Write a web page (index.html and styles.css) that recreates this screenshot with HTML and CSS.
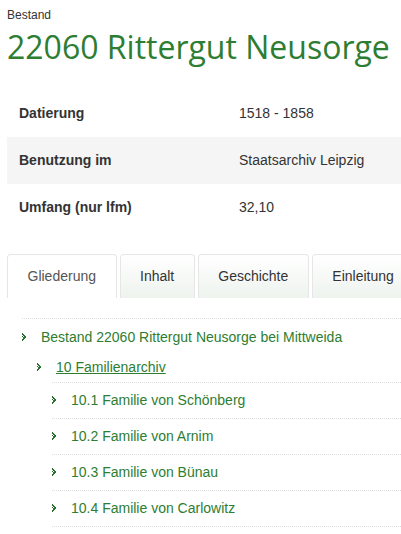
FILE: index.html
```html
<!DOCTYPE html>
<html lang="de">
<head>
    <meta charset="UTF-8">
    <meta name="viewport" content="width=device-width, initial-scale=1.0">
    <title>22060 Rittergut Neusorge</title>
    <link rel="stylesheet" href="styles.css">
</head>
<body>
    <div class="page">
        <div class="kicker">Bestand</div>
        <h1 class="title">22060 Rittergut Neusorge</h1>

        <!-- Eckdaten -->
        <table class="facts">
            <tr>
                <th>Datierung</th>
                <td>1518 - 1858</td>
            </tr>
            <tr class="shade">
                <th>Benutzung im</th>
                <td>Staatsarchiv Leipzig</td>
            </tr>
            <tr>
                <th>Umfang (nur lfm)</th>
                <td>32,10</td>
            </tr>
        </table>

        <!-- Reiter -->
        <ul class="tabs">
            <li class="tab active">Gliederung</li>
            <li class="tab">Inhalt</li>
            <li class="tab">Geschichte</li>
            <li class="tab">Einleitung</li>
        </ul>

        <!-- Gliederung -->
        <ul class="tree level-1">
            <li>
                <a class="node" href="#"><svg class="arrow" viewBox="0 0 5 8"><path d="M0 0h1v1H0zM0 1h2v1H0zM1 2h2v1H1zM0 3h1v1H0zM2 3h2v2H2zM1 4h1v1H1zM1 5h2v1H1zM0 6h2v1H0zM0 7h1v1H0z"/></svg>Bestand 22060 Rittergut Neusorge bei Mittweida</a>
                <ul class="tree level-2">
                    <li>
                        <a class="node current" href="#"><svg class="arrow" viewBox="0 0 5 8"><path d="M0 0h1v1H0zM0 1h2v1H0zM1 2h2v1H1zM0 3h1v1H0zM2 3h2v2H2zM1 4h1v1H1zM1 5h2v1H1zM0 6h2v1H0zM0 7h1v1H0z"/></svg><span class="label">10 Familienarchiv</span></a>
                        <ul class="tree level-3">
                            <li><a class="node" href="#"><svg class="arrow" viewBox="0 0 5 8"><path d="M0 0h1v1H0zM0 1h2v1H0zM1 2h2v1H1zM0 3h1v1H0zM2 3h2v2H2zM1 4h1v1H1zM1 5h2v1H1zM0 6h2v1H0zM0 7h1v1H0z"/></svg>10.1 Familie von Schönberg</a></li>
                            <li><a class="node" href="#"><svg class="arrow" viewBox="0 0 5 8"><path d="M0 0h1v1H0zM0 1h2v1H0zM1 2h2v1H1zM0 3h1v1H0zM2 3h2v2H2zM1 4h1v1H1zM1 5h2v1H1zM0 6h2v1H0zM0 7h1v1H0z"/></svg>10.2 Familie von Arnim</a></li>
                            <li><a class="node" href="#"><svg class="arrow" viewBox="0 0 5 8"><path d="M0 0h1v1H0zM0 1h2v1H0zM1 2h2v1H1zM0 3h1v1H0zM2 3h2v2H2zM1 4h1v1H1zM1 5h2v1H1zM0 6h2v1H0zM0 7h1v1H0z"/></svg>10.3 Familie von Bünau</a></li>
                            <li><a class="node" href="#"><svg class="arrow" viewBox="0 0 5 8"><path d="M0 0h1v1H0zM0 1h2v1H0zM1 2h2v1H1zM0 3h1v1H0zM2 3h2v2H2zM1 4h1v1H1zM1 5h2v1H1zM0 6h2v1H0zM0 7h1v1H0z"/></svg>10.4 Familie von Carlowitz</a></li>
                        </ul>
                    </li>
                </ul>
            </li>
        </ul>
    </div>
</body>
</html>
```

FILE: styles.css
```css
html, body {
    margin: 0;
    background: #fff;
    overflow: hidden;
}

body {
    font-family: "Liberation Sans", Arial, sans-serif;
    font-size: 14px;
    color: #333;
}

.page {
    width: 430px;
    padding: 7px 0 0 7px;
}

.kicker {
    font-size: 12px;
    line-height: 16px;
    color: #333;
}

.title {
    margin: 4px 0 0;
    font-family: "Open Sans", sans-serif;
    font-weight: 400;
    font-size: 32px;
    line-height: 40px;
    color: #2d7d32;
}

/* Eckdaten */
.facts {
    width: 100%;
    margin-top: 23px;
    border-collapse: collapse;
    table-layout: fixed;
}

.facts th,
.facts td {
    padding: 14px 12px;
    line-height: 19px;
    text-align: left;
    vertical-align: middle;
}

.facts th {
    width: 196px;
    font-weight: bold;
}

.facts .shade {
    background: #f5f5f5;
}

/* Reiter */
.tabs {
    display: flex;
    gap: 3px;
    margin: 23px 0 0;
    padding: 0;
    list-style: none;
    white-space: nowrap;
}

.tab {
    height: 43px;
    line-height: 43px;
    padding: 0 19.5px;
    border: 1px solid #e6e6e6;
    border-bottom: none;
    border-radius: 4px 4px 0 0;
    background: linear-gradient(#ffffff, #eef3ee);
    color: #333;
}

.tab.active {
    background: #fff;
    color: #555;
}

/* Gliederung */
.tree {
    margin: 0;
    padding: 0;
    list-style: none;
}

.level-1 {
    margin: 20px 0 0 15px;
    border-top: 1px dotted #ddd;
}

.level-2 {
    margin-left: 15px;
}

.level-3 {
    margin-left: 15px;
    border-top: 1px dotted #ddd;
}

.level-3 > li {
    border-bottom: 1px dotted #ddd;
}

.node {
    display: flex;
    align-items: center;
    line-height: 18px;
    color: #2e7d32;
    text-decoration: none;
}

.level-1 > li > .node {
    padding: 9px 0;
}

.level-2 > li > .node {
    padding: 3px 0 6px;
}

.level-3 > li > .node {
    padding: 8px 0 9px;
}

.node.current .label {
    text-decoration: underline;
}

.arrow {
    flex: none;
    width: 5px;
    height: 8px;
    margin: 0 14px 0 0;
    fill: #2a6f2e;
    shape-rendering: crispEdges;
}
```
